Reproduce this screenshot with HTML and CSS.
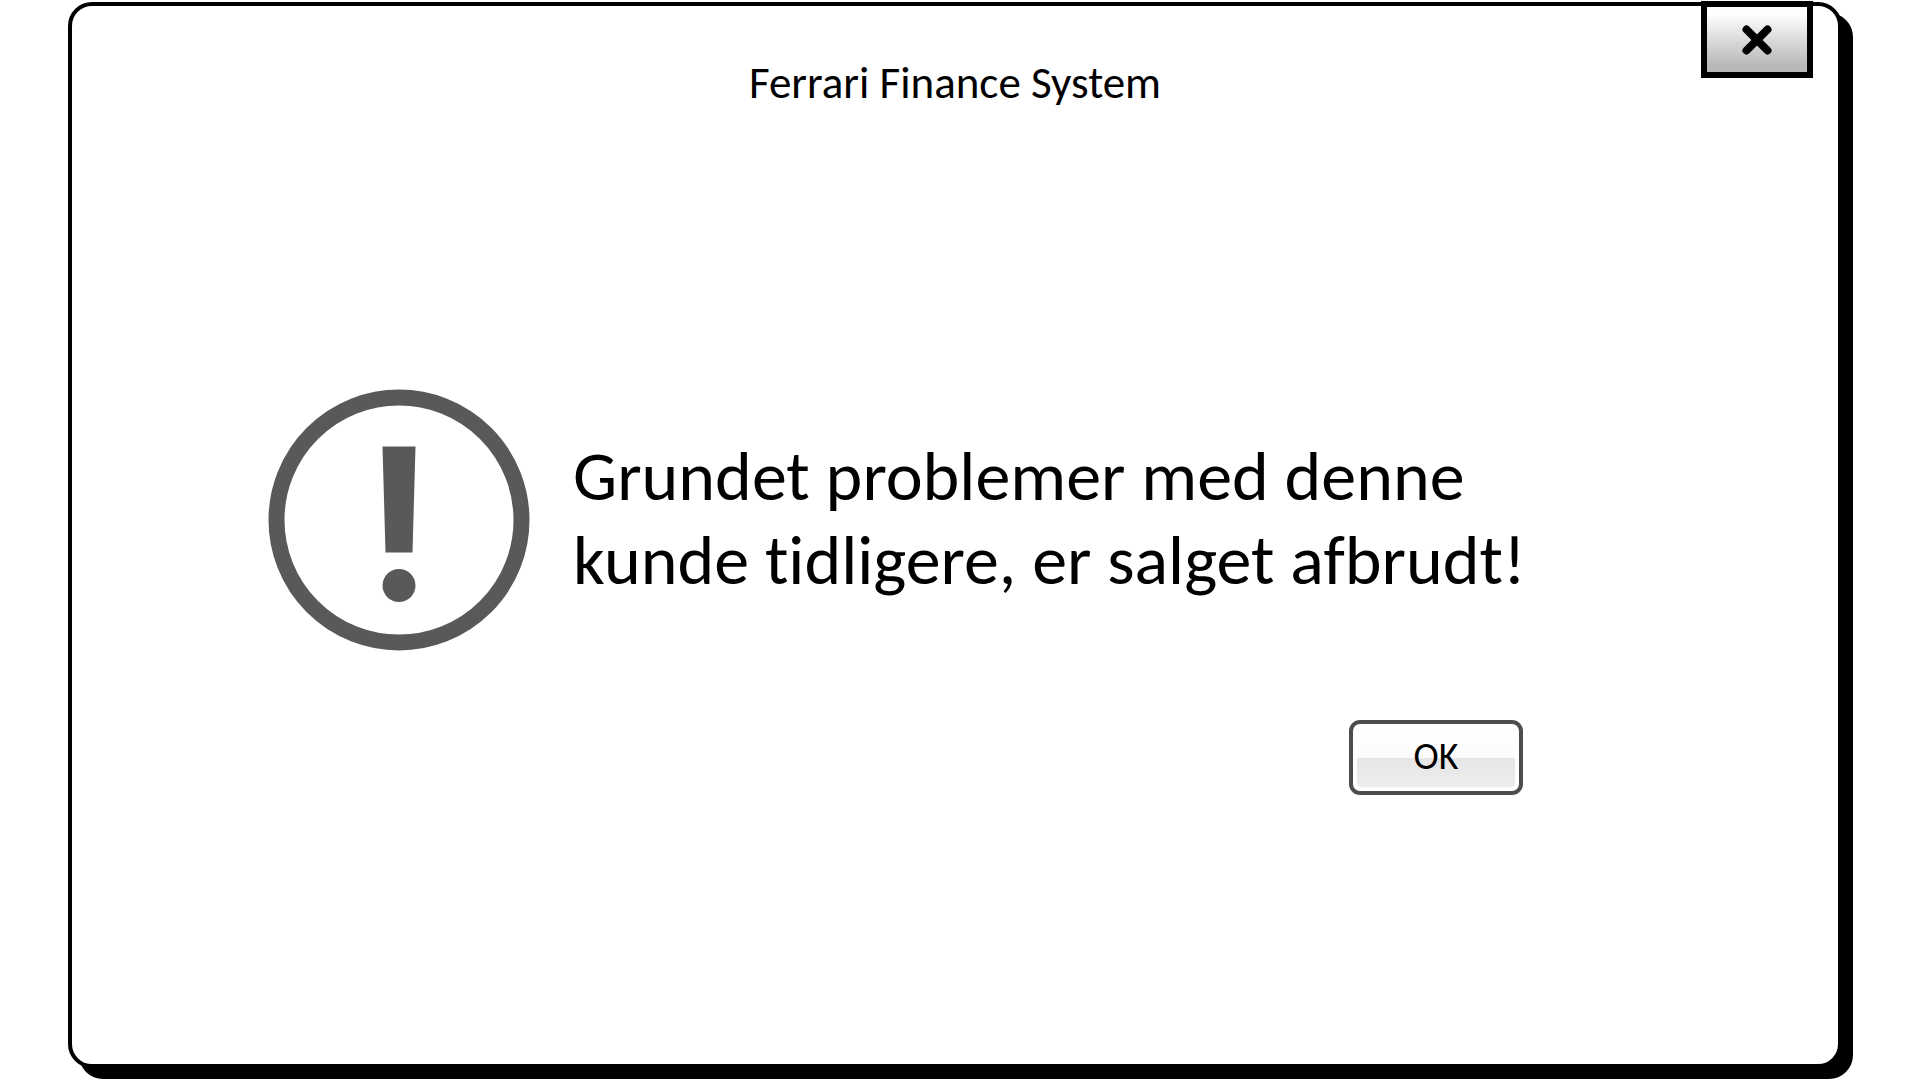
FILE: index.html
```
<!DOCTYPE html>
<html lang="da">
<head>
<meta charset="utf-8">
<title>Ferrari Finance System</title>
<link rel="stylesheet" href="styles.css">
</head>
<body>
<main class="dialog" role="alertdialog" aria-labelledby="title" aria-describedby="message">
  <button class="close" type="button" aria-label="Luk">
    <svg class="close-icon" viewBox="0 0 30 30" aria-hidden="true"><path d="M4.500 4.500 25.500 25.500M25.500 4.500 4.500 25.500"/></svg>
  </button>
  <h1 class="title" id="title">Ferrari Finance System</h1>
  <div class="content">
    <svg class="warning" viewBox="0 0 262 262" aria-hidden="true">
      <circle class="ring" cx="131" cy="131" r="122.500"/>
      <path d="M114.500 57.500h33l-3 106h-27z"/>
      <circle cx="131" cy="196.500" r="16.500"/>
    </svg>
    <p class="message" id="message">Grundet problemer med denne<br>kunde tidligere, er salget afbrudt!</p>
  </div>
  <div class="actions">
    <button class="ok" type="button"><span class="ok-face">OK</span></button>
  </div>
</main>
</body>
</html>
```

FILE: styles.css
```
* {
  box-sizing: border-box;
}

body {
  margin: 0;
  min-height: 100vh;
  padding: 2px 78px 12px 68px;
  display: flex;
  background: #fff;
  color: #000;
  font-family: Calibri, Carlito, "Open Sans", sans-serif;
  font-variant-ligatures: none;
}

.dialog {
  position: relative;
  flex: 1;
  display: flex;
  flex-direction: column;
  border: 4px solid #000;
  border-radius: 24px;
  background: #fff;
  box-shadow: 11px 11px 0 #000;
}

.close {
  position: absolute;
  top: -5px;
  right: 25px;
  width: 112px;
  height: 77px;
  padding: 0;
  display: flex;
  align-items: center;
  justify-content: center;
  border: 6px solid #000;
  background: linear-gradient(#fff 10%, #b8b8b8 90%);
}

.close-icon {
  width: 30px;
  height: 30px;
  fill: none;
  stroke: #000;
  stroke-width: 8;
  stroke-linecap: round;
}

.title {
  margin: 49px 0 0;
  font-size: 45px;
  font-weight: 400;
  line-height: 56px;
  text-align: center;
}

.content {
  margin-top: 278px;
  padding-left: 196px;
  display: flex;
  align-items: center;
  gap: 43px;
}

.warning {
  flex: none;
  width: 262px;
  height: 262px;
  fill: #595959;
}

.ring {
  fill: none;
  stroke: #595959;
  stroke-width: 16;
}

.message {
  margin: 0;
  padding-bottom: 4px;
  font-size: 70px;
  line-height: 84px;
}

.actions {
  margin-top: 69px;
  padding-right: 315px;
  display: flex;
  justify-content: flex-end;
}

.ok {
  width: 174px;
  height: 75px;
  padding: 4px;
  display: flex;
  border: 4px solid #4d4d4d;
  border-radius: 11px;
  background: #fff;
  color: #000;
  font: inherit;
  font-size: 38px;
  line-height: 56px;
}

.ok-face {
  flex: 1;
  padding-bottom: 3px;
  display: flex;
  align-items: center;
  justify-content: center;
  border-radius: 4px;
  background: linear-gradient(#fff 0%, #fcfcfc 50%, #e6e6e6 50%, #ededed 100%);
}
```
